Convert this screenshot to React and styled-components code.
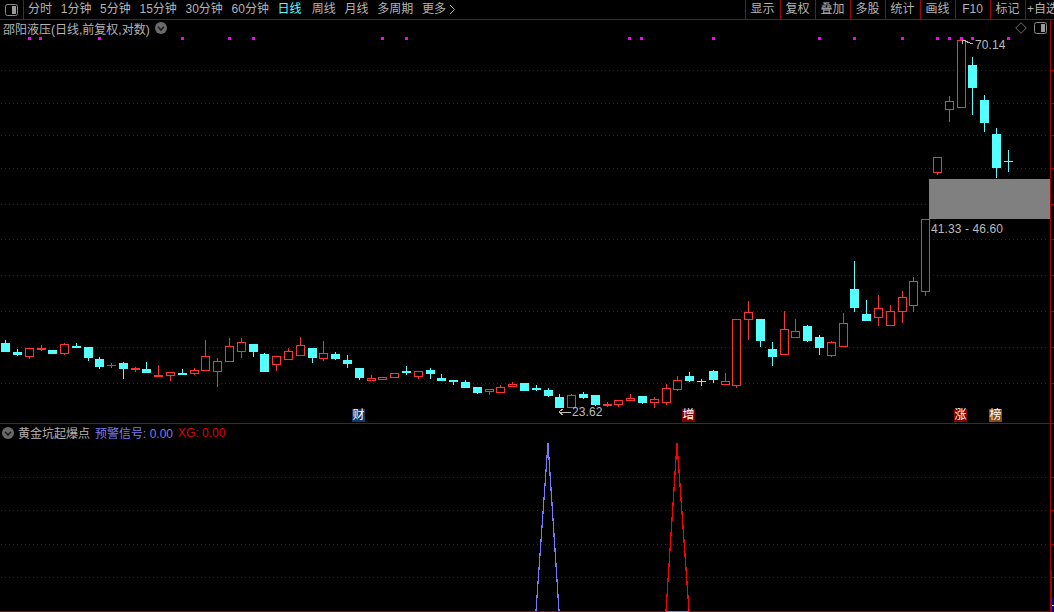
import styled, { createGlobalStyle } from "styled-components";

const RED = "#a80000";
const UP = "#ff3232";
const DOWN = "#54ffff";
const FONT = `"Liberation Sans", "Noto Sans CJK SC", sans-serif`;

const periods = ["分时", "1分钟", "5分钟", "15分钟", "30分钟", "60分钟", "日线", "周线", "月线", "多周期"];
const tools = ["显示", "复权", "叠加", "多股", "统计", "画线", "F10", "标记", "+自选"];

const mainGrid = [70, 103, 135, 168, 204, 239, 275, 311, 347, 383];
const subGrid = [477, 510, 544, 577];
const signals = [28, 39, 98, 181, 228, 252, 381, 405, 628, 640, 712, 818, 853, 901, 936, 948, 960, 971, 1007];

// x, body top, body bottom, wick top, wick bottom, colour
const candles = [
  [5, 343, 352, 340, 352, "c"], [17, 352, 355, 349, 356, "c"], [29, 348, 357, 348, 359, "r"],
  [41, 348, 350, 345, 351, "r"], [52, 350, 354, 350, 354, "c"], [64, 344, 354, 343, 355, "r"],
  [76, 346, 348, 343, 348, "c"], [88, 347, 358, 347, 361, "c"], [99, 359, 367, 357, 369, "c"],
  [111, 365, 366, 363, 368, "r"], [123, 363, 369, 362, 379, "c"], [135, 368, 370, 367, 372, "r"],
  [146, 369, 373, 362, 373, "c"], [158, 375, 377, 365, 377, "r"], [170, 372, 376, 372, 381, "r"],
  [182, 373, 375, 369, 375, "c"], [194, 370, 374, 368, 375, "r"], [205, 356, 371, 340, 371, "r"],
  [217, 361, 372, 358, 387, "r"], [229, 346, 362, 338, 362, "r"], [241, 342, 352, 338, 358, "r"],
  [253, 344, 352, 344, 357, "c"], [264, 354, 372, 353, 372, "c"], [276, 356, 365, 356, 371, "r"],
  [288, 351, 360, 348, 360, "r"], [300, 345, 356, 337, 356, "r"], [312, 348, 358, 348, 363, "c"],
  [323, 353, 359, 341, 361, "r"], [335, 354, 359, 352, 360, "c"], [347, 360, 364, 355, 368, "c"],
  [359, 368, 378, 368, 380, "c"], [371, 378, 381, 375, 381, "r"], [382, 377, 380, 377, 380, "r"],
  [394, 373, 378, 373, 378, "r"], [406, 371, 373, 366, 375, "c"], [418, 371, 377, 371, 379, "r"],
  [430, 370, 374, 368, 379, "c"], [441, 378, 381, 374, 381, "c"], [453, 380, 382, 380, 385, "c"],
  [465, 382, 388, 380, 388, "c"], [477, 387, 393, 387, 394, "c"], [489, 389, 392, 389, 395, "r"],
  [500, 387, 393, 385, 393, "r"], [512, 384, 387, 382, 387, "r"], [524, 383, 391, 383, 391, "c"],
  [536, 388, 390, 385, 391, "c"], [548, 390, 396, 388, 397, "c"], [559, 397, 408, 394, 408, "c"],
  [571, 395, 408, 394, 408, "r"], [583, 394, 398, 392, 399, "c"], [595, 395, 405, 395, 406, "c"],
  [607, 404, 406, 402, 407, "r"], [618, 400, 405, 400, 407, "r"], [630, 398, 401, 394, 401, "r"],
  [642, 396, 403, 396, 404, "c"], [654, 399, 403, 397, 408, "r"], [666, 388, 403, 384, 405, "r"],
  [677, 380, 390, 376, 391, "r"], [689, 376, 381, 372, 382, "c"], [701, 381, 382, 379, 386, "c"],
  [713, 371, 380, 370, 383, "c"], [725, 381, 385, 373, 385, "r"], [736, 319, 386, 319, 388, "r"],
  [748, 312, 320, 301, 340, "r"], [760, 319, 341, 319, 347, "c"], [772, 349, 357, 342, 366, "c"],
  [784, 329, 355, 311, 355, "r"], [795, 331, 338, 319, 338, "r"], [807, 326, 341, 325, 342, "c"],
  [819, 337, 348, 335, 355, "c"], [831, 342, 356, 341, 357, "r"], [843, 323, 347, 313, 347, "r"],
  [854, 289, 308, 261, 312, "c"], [866, 314, 321, 300, 321, "c"], [878, 308, 318, 295, 326, "r"],
  [890, 311, 326, 305, 326, "r"], [902, 297, 312, 291, 323, "r"], [913, 281, 306, 277, 312, "r"],
  [925, 219, 292, 219, 296, "r"], [937, 157, 173, 157, 175, "r"], [949, 101, 110, 96, 122, "r"],
  [961, 40, 108, 40, 108, "r"], [972, 65, 88, 57, 115, "c"], [984, 100, 123, 95, 132, "c"],
  [996, 134, 168, 128, 178, "c"], [1008, 161, 162, 150, 172, "c"],
];

const labels = [
  { x: 975, y: 45, text: "70.14" },
  { x: 931, y: 229, text: "41.33 - 46.60" },
  { x: 572, y: 412, text: "23.62" },
];

const badges = [
  { x: 352, text: "财", bg: "#0b3a6b" },
  { x: 682, text: "增", bg: "#860000" },
  { x: 954, text: "涨", bg: "#860000" },
  { x: 989, text: "榜", bg: "#8a4b12" },
];

const GlobalStyle = createGlobalStyle`
  html, body {
    margin: 0;
    padding: 0;
    background: #000;
    overflow: hidden;
  }
`;

const Page = styled.div`
  width: 1054px;
  height: 612px;
  background: #000;
  color: #b4b4b4;
  font-family: ${FONT};
  font-size: 12px;
  overflow: hidden;
`;

const Toolbar = styled.div`
  display: flex;
  height: 19px;
  border-bottom: 1px solid ${RED};
  line-height: 19px;
`;

const ToggleButton = styled.div`
  flex: 0 0 23px;
  display: flex;
  align-items: center;
  justify-content: center;
  border-right: 1px solid ${RED};
`;

const PeriodNav = styled.div`
  flex: 0 0 721px;
  display: flex;
  gap: 8.7px;
  padding-left: 4px;
  box-sizing: border-box;
`;

const Period = styled.span`
  color: ${(p) => (p.$active ? DOWN : "#b4b4b4")};
  margin-right: ${(p) => (p.$active ? "1.5px" : "0")};
  white-space: nowrap;
`;

const More = styled.span`
  display: flex;
  align-items: center;
  gap: 3px;
  white-space: nowrap;
`;

const ToolGroup = styled.div`
  display: flex;
  flex: none;
`;

const Tool = styled.div`
  width: 35px;
  box-sizing: border-box;
  padding-right: 1px;
  border-left: 1px solid ${RED};
  text-align: center;
  white-space: nowrap;
`;

const Body = styled.div`
  display: flex;
  height: 592px;
`;

const Panels = styled.div`
  flex: 0 0 1050px;
  display: flex;
  flex-direction: column;
`;

const Legend = styled.div`
  display: flex;
  align-items: center;
  gap: 5px;
  height: ${(p) => p.$height}px;
  padding: 0 3px;
  white-space: nowrap;
`;

const LegendIcons = styled.div`
  display: flex;
  align-items: center;
  gap: 7px;
  margin-left: auto;
`;

const IndicatorLegend = styled(Legend)`
  gap: 4px;
  padding: 0 2px;
  border-top: 1px solid ${RED};
`;

const Value = styled.span`
  color: ${(p) => p.$color};
  margin-left: 1px;
`;

const ChartArea = styled.div`
  position: relative;
  height: ${(p) => p.$height}px;
`;

const ChartSvg = styled.svg`
  display: block;
  shape-rendering: crispEdges;
`;

const PriceLabel = styled.span`
  position: absolute;
  left: ${(p) => p.$x}px;
  top: ${(p) => p.$y - 36 - 7}px;
  line-height: 14px;
  letter-spacing: 0.1px;
  color: #bcbcbc;
  white-space: nowrap;
`;

const Badge = styled.span`
  position: absolute;
  left: ${(p) => p.$x}px;
  top: 373px;
  width: 13px;
  height: 13px;
  background: ${(p) => p.$bg};
  color: #fff;
  line-height: 13px;
  text-align: center;
  font-size: 12px;
`;

const Axis = styled.svg`
  flex: none;
  display: block;
  shape-rendering: crispEdges;
`;

const ToggleIcon = () => (
  <svg width="13" height="12" viewBox="0 0 13 12">
    <rect x="0.5" y="0.5" width="12" height="11" rx="2" fill="#000" stroke="#8c8c8c" />
    <rect x="7" y="2" width="4" height="8" fill="#9a9a9a" />
  </svg>
);

const ChevronDot = () => (
  <svg width="12" height="12" viewBox="0 0 12 12">
    <circle cx="6" cy="6" r="6" fill="#6a6a6a" />
    <path d="M3 4.8 L6 8 L9 4.8" fill="none" stroke="#1c1c1c" strokeWidth="1.6" />
  </svg>
);

const Candle = ({ data }) => {
  const [x, top, bottom, wickTop, wickBottom, kind] = data;
  const wickX = x + 0.5;
  if (kind === "c") {
    return (
      <g>
        <line x1={wickX} x2={wickX} y1={wickTop} y2={wickBottom} stroke={DOWN} />
        <rect x={x - 4} y={top} width="9" height={bottom - top} fill={DOWN} />
      </g>
    );
  }
  return (
    <g stroke={UP}>
      <line x1={wickX} x2={wickX} y1={wickTop} y2={top} />
      <line x1={wickX} x2={wickX} y1={bottom} y2={wickBottom} />
      {bottom - top > 1 ? (
        <rect x={x - 3.5} y={top + 0.5} width="8" height={bottom - top - 1} fill="#000" />
      ) : (
        <line x1={x - 4} x2={x + 5} y1={top + 0.5} y2={top + 0.5} />
      )}
    </g>
  );
};

const GridLines = ({ rows }) =>
  rows.map((y) => (
    <line key={y} x1="1" x2="1048" y1={y + 0.5} y2={y + 0.5} stroke="#8c0000" strokeDasharray="1 3" />
  ));

const App = () => {
  return (
    <Page>
      <GlobalStyle />
      <Toolbar>
        <ToggleButton>
          <ToggleIcon />
        </ToggleButton>
        <PeriodNav>
          {periods.map((name) => (
            <Period key={name} $active={name === "日线"}>
              {name}
            </Period>
          ))}
          <More>
            更多
            <svg width="7" height="11" viewBox="0 0 7 11">
              <path d="M1 1 L5.5 5.5 L1 10" fill="none" stroke="#b4b4b4" />
            </svg>
          </More>
        </PeriodNav>
        <ToolGroup>
          {tools.map((name) => (
            <Tool key={name}>{name}</Tool>
          ))}
        </ToolGroup>
      </Toolbar>

      <Body>
        <Panels>
          <Legend $height={16}>
            <span>邵阳液压(日线,前复权,对数)</span>
            <ChevronDot />
            <LegendIcons>
              <svg width="12" height="12" viewBox="0 0 12 12">
                <path d="M6 0.7 L11.3 6 L6 11.3 L0.7 6 Z" fill="none" stroke="#6e6e6e" />
              </svg>
              <ToggleIcon />
            </LegendIcons>
          </Legend>

          <ChartArea $height={387}>
            <ChartSvg width="1050" height="387" viewBox="0 36 1050 387">
              <GridLines rows={mainGrid} />
              {signals.map((x) => (
                <rect key={x} x={x} y="37" width="3" height="3" fill="#ff00ff" />
              ))}
              {candles.map((c) => (
                <Candle key={c[0]} data={c} />
              ))}
              <rect x="929" y="179" width="121" height="40" fill="#808080" />
              <path d="M962 40 L973 44 M962 40 L966 40 M962 40 L963 44" fill="none" stroke="#bcbcbc" />
              <path d="M559 412 L571 412 M559 412 L563 409 M559 412 L563 415" fill="none" stroke="#bcbcbc" />
            </ChartSvg>
            {labels.map((l) => (
              <PriceLabel key={l.text} $x={l.x} $y={l.y}>
                {l.text}
              </PriceLabel>
            ))}
            {badges.map((b) => (
              <Badge key={b.text} $x={b.x} $bg={b.bg}>
                {b.text}
              </Badge>
            ))}
          </ChartArea>

          <IndicatorLegend $height={17}>
            <ChevronDot />
            <span>黄金坑起爆点</span>
            <Value $color="#7c7cf0">预警信号: 0.00</Value>
            <Value $color="#e00000">XG: 0.00</Value>
          </IndicatorLegend>

          <ChartArea $height={171}>
            <ChartSvg width="1050" height="171" viewBox="0 441 1050 171">
              <GridLines rows={subGrid} />
              <line x1="0" x2="1050" y1="611.5" y2="611.5" stroke={RED} />
              <line x1="666" x2="689" y1="611.5" y2="611.5" stroke="#7878ff" />
              <polyline points="536,611 548,443 559,611" fill="none" stroke="#7878ff" strokeWidth="1.25" />
              <polyline points="666,611 677,443 689,611" fill="none" stroke="#ff0000" strokeWidth="1.25" />
            </ChartSvg>
          </ChartArea>
        </Panels>

        <Axis width="4" height="592" viewBox="0 20 4 592">
          <rect x="0" y="20" width="1" height="592" fill={RED} />
          <rect x="1" y="570" width="1" height="42" fill={RED} />
          {[...mainGrid, ...subGrid, 423].map((y) => (
            <line key={y} x1="1" x2="4" y1={y + 0.5} y2={y + 0.5} stroke={RED} />
          ))}
          <rect x="2" y="597" width="2" height="15" fill="#00007c" />
          <rect x="2" y="605" width="2" height="1" fill="#e0e0e0" />
        </Axis>
      </Body>
    </Page>
  );
};

export default App;
